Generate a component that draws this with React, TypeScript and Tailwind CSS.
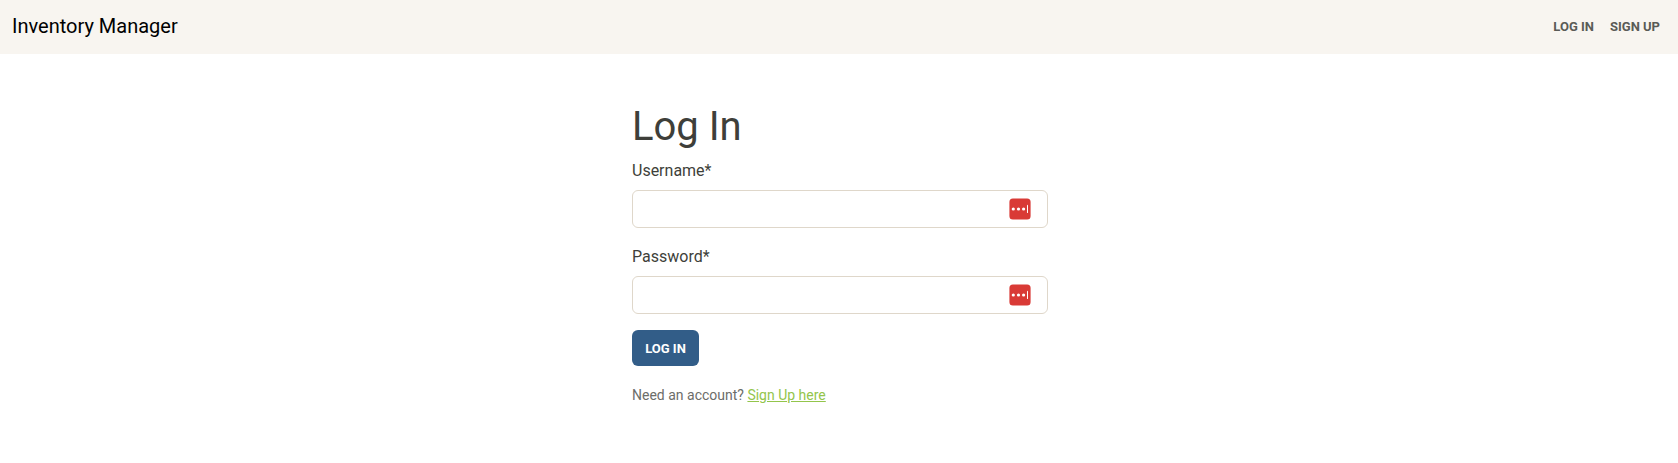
import React from "react";

function KeyBadge() {
  return (
    <svg width="22" height="22" viewBox="0 0 22 22">
      <rect x="0.4" y="0.4" width="21.2" height="21.2" rx="3.5" fill="#d93a36" />
      <circle cx="4.3" cy="11" r="1.6" fill="#fff" />
      <circle cx="9.5" cy="11" r="1.6" fill="#fff" />
      <circle cx="14.6" cy="11" r="1.6" fill="#fff" />
      <rect x="18" y="6.8" width="1" height="8.2" rx="0.5" fill="#fff" />
    </svg>
  );
}

function Field({ id, label, type }: { id: string; label: string; type: string }) {
  return (
    <div className="mb-4">
      <label htmlFor={id} className="mb-[7px] block pt-px text-base leading-6">{label}</label>
      <div className="flex h-[38px] items-center rounded-md border border-[#dfd7ca] bg-white pr-4">
        <input id={id} type={type} className="h-full min-w-0 flex-1 bg-transparent px-3 outline-none" />
        <KeyBadge />
      </div>
    </div>
  );
}

export default function App() {
  return (
    <div className="min-h-[463px] bg-white font-['Roboto',sans-serif] text-[#3e3f3a]">
      <nav className="flex h-[54px] items-center justify-between bg-[#f8f5f0] pl-3 pr-[18px]">
        <a href="#" className="pb-0.5 text-xl leading-[30px] text-black">Inventory Manager</a>
        <div className="flex gap-4 text-[13px] font-bold uppercase leading-[18px] text-[#5a5b56]">
          <a href="#">Log In</a>
          <a href="#">Sign Up</a>
        </div>
      </nav>
      <main className="mx-auto w-[418px] pl-0.5 pt-[49px]">
        <h1 className="mb-[7px] text-[40px] leading-[48px]">Log In</h1>
        <form>
          <Field id="username" label="Username*" type="text" />
          <Field id="password" label="Password*" type="password" />
          <button type="button" className="block h-9 w-[67px] rounded-md bg-[#325d88] pt-px text-[13px] font-bold uppercase leading-[18px] text-white">Log In</button>
        </form>
        <p className="mt-[19px] text-sm leading-[21px] text-[#6c6d69]">
          Need an account? <a href="#" className="text-[#93c54b] underline">Sign Up here</a>
        </p>
      </main>
    </div>
  );
}
